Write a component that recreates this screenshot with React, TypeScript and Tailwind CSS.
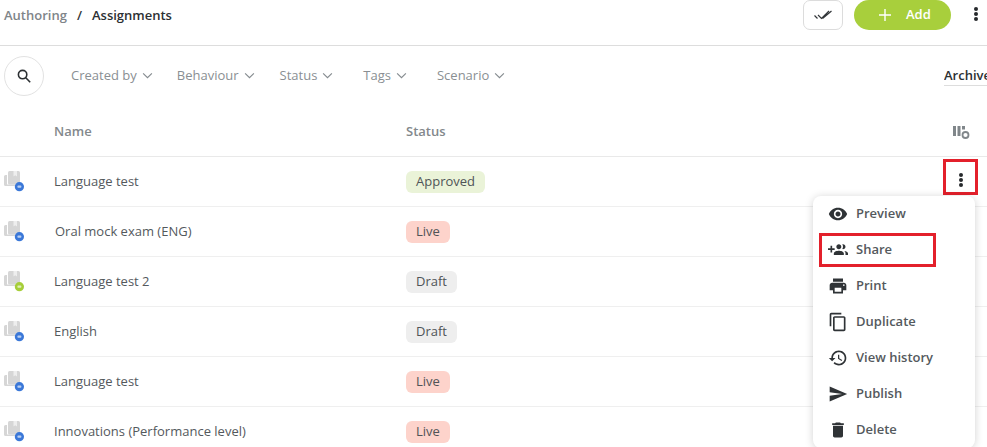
const FONT = "font-['Open_Sans','Noto_Sans',sans-serif]";

const ICONS: Record<string, string> = {
  visibility: "M12 4.5C7 4.5 2.73 7.61 1 12c1.73 4.39 6 7.5 11 7.5s9.27-3.11 11-7.5c-1.73-4.39-6-7.5-11-7.5zM12 17c-2.76 0-5-2.24-5-5s2.24-5 5-5 5 2.24 5 5-2.24 5-5 5zm0-8c-1.66 0-3 1.34-3 3s1.34 3 3 3 3-1.34 3-3-1.34-3-3-3z",
  groupAdd: "M8 10H5V7H3v3H0v2h3v3h2v-3h3v-2zm10 1c1.66 0 2.99-1.34 2.99-3S19.66 5 18 5c-.32 0-.63.05-.91.14.57.81.9 1.79.9 2.86s-.34 2.04-.9 2.86c.28.09.59.14.91.14zm-5 0c1.66 0 2.99-1.34 2.99-3S14.66 5 13 5s-3 1.34-3 3 1.34 3 3 3zm6.62 2.16c.83.73 1.38 1.66 1.38 2.84v2h3v-2c0-1.54-2.37-2.49-4.38-2.84zM13 13c-2 0-6 1-6 3v2h12v-2c0-2-4-3-6-3z",
  print: "M19 8H5c-1.66 0-3 1.34-3 3v6h4v4h12v-4h4v-6c0-1.66-1.34-3-3-3zm-3 11H8v-5h8v5zm3-7c-.55 0-1-.45-1-1s.45-1 1-1 1 .45 1 1-.45 1-1 1zm-1-9H6v4h12V3z",
  copy: "M16 1H4c-1.1 0-2 .9-2 2v14h2V3h12V1zm3 4H8c-1.1 0-2 .9-2 2v14c0 1.1.9 2 2 2h11c1.1 0 2-.9 2-2V7c0-1.1-.9-2-2-2zm0 16H8V7h11v14z",
  history: "M13 3c-4.97 0-9 4.03-9 9H1l3.89 3.89.07.14L9 12H6c0-3.87 3.13-7 7-7s7 3.13 7 7-3.13 7-7 7c-1.93 0-3.68-.79-4.94-2.06l-1.42 1.42C8.27 19.99 10.51 21 13 21c4.97 0 9-4.03 9-9s-4.03-9-9-9zm-1 5v5l4.28 2.54.72-1.21-3.5-2.08V8H12z",
  send: "M2.01 21L23 12 2.01 3 2 10l15 2-15 2z",
  trash: "M6 19c0 1.1.9 2 2 2h8c1.1 0 2-.9 2-2V7H6v12zM19 4h-3.5l-1-1h-5l-1 1H5v2h14V4z",
};

function Mi({ name }: { name: string }) {
  return (
    <svg viewBox="0 0 24 24" className="h-[20px] w-[20px] shrink-0 fill-[#2f3336]">
      <path d={ICONS[name]} />
    </svg>
  );
}

function Dots({ className = "" }: { className?: string }) {
  return (
    <span className={`flex flex-col items-center gap-[1px] ${className}`}>
      <span className="h-[4px] w-[4px] rounded-full bg-[#26292c]" />
      <span className="h-[4px] w-[4px] rounded-full bg-[#26292c]" />
      <span className="h-[4px] w-[4px] rounded-full bg-[#26292c]" />
    </span>
  );
}

function Chevron() {
  return (
    <svg viewBox="0 0 12 8" className="h-[7px] w-[11px] fill-none stroke-[#858b8f] stroke-[1.3]">
      <path d="M1 1.5l5 5 5-5" />
    </svg>
  );
}

function Filter({ label, className = "" }: { label: string; className?: string }) {
  return (
    <span className={`flex items-center gap-[5px] text-[13px] text-[#8a8f93] ${className}`}>
      {label}
      <Chevron />
    </span>
  );
}

function RowIcon({ color }: { color: string }) {
  return (
    <svg viewBox="0 1 22 22" className="h-[22px] w-[22px] shrink-0">
      <path d="M1 6.5A1.5 1.5 0 0 1 2.5 5H4v9.5h9V16H2.5A1.5 1.5 0 0 1 1 14.5z" fill="#d6d6d6" />
      <path d="M5 2.5A1.5 1.5 0 0 1 6.5 1h9A1.5 1.5 0 0 1 17 2.5V13.5a1 1 0 0 1-1 1H6.5A1.5 1.5 0 0 1 5 13z" fill="#d6d6d6" />
      <path d="M10.5 1h3.5v5.5l-1.75-1.2L10.5 6.5z" fill="#eeeeee" />
      <circle cx="16.4" cy="16.7" r="4.6" fill={color} />
      <rect x="14.4" y="15.6" width="4" height="2.2" rx="0.8" fill="#ffffff" fillOpacity="0.65" />
    </svg>
  );
}

const BADGE: Record<string, string> = {
  Approved: "bg-[#eaf3d8]",
  Live: "bg-[#fdd3cb]",
  Draft: "bg-[#eeeeee]",
};

const ROWS = [
  { name: "Language test", status: "Approved", color: "#3b78d8", indent: "pl-0" },
  { name: "Oral mock exam (ENG)", status: "Live", color: "#3b78d8", indent: "pl-[1px]" },
  { name: "Language test 2", status: "Draft", color: "#a6ce39", indent: "pl-0" },
  { name: "English", status: "Draft", color: "#3b78d8", indent: "pl-0" },
  { name: "Language test", status: "Live", color: "#3b78d8", indent: "pl-0" },
  { name: "Innovations (Performance level)", status: "Live", color: "#3b78d8", indent: "pl-0" },
];

const MENU = [
  { icon: "visibility", label: "Preview" },
  { icon: "groupAdd", label: "Share", boxed: true },
  { icon: "print", label: "Print" },
  { icon: "copy", label: "Duplicate" },
  { icon: "history", label: "View history" },
  { icon: "send", label: "Publish" },
  { icon: "trash", label: "Delete" },
];

export default function App() {
  return (
    <div className={`relative h-[447px] w-[987px] overflow-hidden bg-white ${FONT}`}>
      <header className="flex h-[46px] items-start justify-between border-b border-[#dddddd] pl-[4px]">
        <div className="flex h-[31px] items-center text-[13px] font-semibold">
          <span className="text-[#7f8589]">Authoring</span>
          <span className="mx-[10px] text-[#33373a]">/</span>
          <span className="text-[#2c3033]">Assignments</span>
        </div>
        <div className="flex items-start">
          <button className="flex h-[30px] w-[40px] items-center justify-center rounded-[7px] border border-[#dcdcdc] bg-white">
            <svg viewBox="0 0 18 12" className="h-[12px] w-[18px] fill-none stroke-[#33373a] stroke-[1.2]">
              <path d="M0.5 6.5l3 3M4 6l3.5 3.5L15 2M8.5 9.5L17.5 2" />
            </svg>
          </button>
          <button className="ml-[11px] flex h-[30px] w-[97px] items-center rounded-full bg-[#a8cf3c] pl-[25px] text-[13px] font-semibold text-white">
            <svg viewBox="0 0 12 12" className="mr-[15px] h-[12px] w-[12px] fill-none stroke-white stroke-[1.4]">
              <path d="M6 0v12M0 6h12" />
            </svg>
            Add
          </button>
          <Dots className="ml-[23px] mr-[9px] mt-[7px]" />
        </div>
      </header>

      <div className="flex h-[59px] items-center justify-between pl-[4px]">
        <div className="flex items-center">
          <span className="flex h-[40px] w-[40px] items-center justify-center rounded-full border border-[#e2e2e2]">
            <svg viewBox="0 0 14 14" className="h-[14px] w-[14px] fill-none stroke-[#2b2f32] stroke-[1.6]">
              <circle cx="5.6" cy="5.6" r="4.2" />
              <path d="M8.8 8.8l4.4 4.4" />
            </svg>
          </span>
          <div className="ml-[27px] flex items-center">
            <Filter label="Created by" />
            <Filter label="Behaviour" className="ml-[24px]" />
            <Filter label="Status" className="ml-[25px]" />
            <Filter label="Tags" className="ml-[30px]" />
            <Filter label="Scenario" className="ml-[30px]" />
          </div>
        </div>
        <span className="w-[43px] overflow-hidden whitespace-nowrap border-b border-[#dddddd] text-[13px] font-semibold leading-[20px] text-[#2c3033]">
          Archive
        </span>
      </div>

      <div className="flex h-[52px] items-center border-b border-[#e9e9e9] pt-[3px] text-[13px] font-semibold text-[#83888c]">
        <span className="ml-[54px] w-[352px]">Name</span>
        <span className="flex-1">Status</span>
        <svg viewBox="0 0 18 16" className="mr-[17px] h-[16px] w-[18px]">
          <path d="M1 2h3v10H1zM5.5 2h3v10h-3zM10 2h3v3.5h-3z" fill="#80868a" />
          <circle cx="13.5" cy="11" r="3" fill="none" stroke="#80868a" strokeWidth="1.8" />
        </svg>
      </div>

      {ROWS.map((r, i) => (
        <div key={i} className="flex h-[50px] items-center border-b border-[#efefef] pl-[3px] text-[13px] text-[#54595d]">
          <RowIcon color={r.color} />
          <span className="ml-[29px] w-[352px]">
            <span className={r.indent}>{r.name}</span>
          </span>
          <span className={`rounded-[6px] px-[10px] pb-[1px] text-[13px] leading-[21px] ${BADGE[r.status]} text-[#4f5457]`}>
            {r.status}
          </span>
        </div>
      ))}

      {/* Highlighted row action */}
      <div className="absolute left-[943px] top-[159px] flex h-[36px] w-[35px] items-center justify-center border-[3px] border-[#e3202b] pt-[6px]">
        <Dots />
      </div>

      {/* Context menu */}
      <div className="absolute left-[813px] top-[196px] w-[162px] rounded-[8px] bg-white py-[0px] shadow-[0_1px_8px_rgba(0,0,0,0.18)]">
        {MENU.map((m) => (
          <div key={m.label} className="relative flex h-[36px] items-center pl-[15px] text-[13px] font-semibold text-[#54595d]">
            <Mi name={m.icon} />
            <span className="ml-[8px]">{m.label}</span>
            {m.boxed && (
              <span className="absolute left-[6px] top-[1px] h-[34px] w-[117px] border-[3px] border-[#e3202b]" />
            )}
          </div>
        ))}
      </div>
    </div>
  );
}
